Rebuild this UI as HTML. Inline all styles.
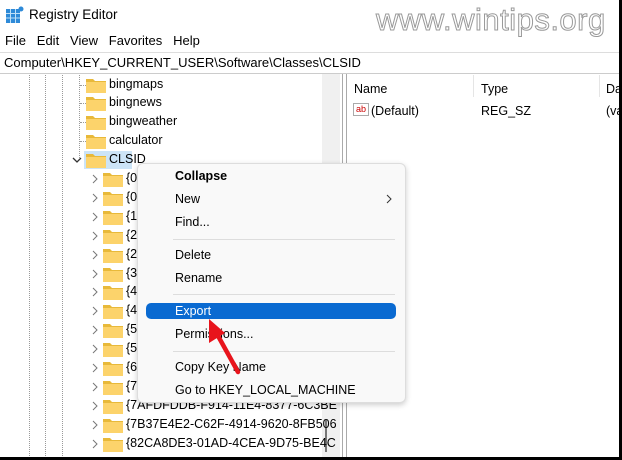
<!DOCTYPE html>
<html><head><style>
*{margin:0;padding:0;box-sizing:border-box}
html,body{width:622px;height:460px;overflow:hidden}
body{background:#fff;font-family:"Liberation Sans",sans-serif;font-size:12.5px;color:#000;position:relative}
.a{position:absolute;white-space:nowrap}
.f{position:absolute;width:20px;height:15px}
.dl{position:absolute;top:75px;width:0;height:385px;border-left:1px dotted #999}
.mi{position:absolute;left:175px;font-size:12.5px}
.sep{position:absolute;left:173px;width:222px;height:1px;background:#ddd}
</style></head><body>
<svg class="a" style="left:6px;top:6px" width="18" height="18" viewBox="0 0 18 18"><rect x="0" y="3" width="14" height="14" fill="#2e8ad8"/><g stroke="#bfe0f8" stroke-width="1"><line x1="0" y1="7.5" x2="14" y2="7.5"/><line x1="0" y1="12" x2="14" y2="12"/><line x1="4.5" y1="3" x2="4.5" y2="17"/><line x1="9.5" y1="3" x2="9.5" y2="17"/></g><circle cx="15" cy="3" r="2.5" fill="#2e8ad8"/></svg>
<div class="a" style="left:29px;top:7px;font-size:13.5px">Registry Editor</div>
<div class="a" style="left:376px;top:2px;font-size:31px;color:#fff;-webkit-text-stroke:1px #999;letter-spacing:0.5px">www.wintips.org</div>
<div class="a" style="left:5px;top:33px;font-size:13px">File&nbsp;&nbsp;&nbsp;Edit&nbsp;&nbsp;&nbsp;View&nbsp;&nbsp;&nbsp;Favorites&nbsp;&nbsp;&nbsp;Help</div>
<div class="a" style="left:0;top:52px;width:622px;height:1px;background:#ddd"></div>
<div class="a" style="left:4px;top:55px;font-size:13px">Computer\HKEY_CURRENT_USER\Software\Classes\CLSID</div>
<div class="a" style="left:0;top:73px;width:622px;height:1px;background:#ccc"></div>
<div class="dl" style="left:29px"></div><div class="dl" style="left:45px"></div><div class="dl" style="left:62px"></div><div class="dl" style="left:79px;height:85px"></div>
<div class="a" style="left:322px;top:74px;width:18px;height:386px;background:#f0f0f0"></div>
<div class="a" style="left:325px;top:420px;width:2px;height:32px;background:#777"></div>
<div class="a" style="left:342px;top:74px;width:1px;height:386px;background:#aaa"></div>
<div class="a" style="left:346px;top:74px;width:1px;height:386px;background:#aaa"></div>
<div class="a" style="left:354px;top:82px">Name</div>
<div class="a" style="left:473px;top:75px;width:1px;height:22px;background:#e5e5e5"></div>
<div class="a" style="left:481px;top:82px">Type</div>
<div class="a" style="left:599px;top:75px;width:1px;height:22px;background:#e5e5e5"></div>
<div class="a" style="left:606px;top:82px">Da</div>
<div class="a" style="left:353px;top:103px;width:16px;height:13px;border:1px solid #aaa;font-size:9px;color:#c00;line-height:11px;text-align:center">ab</div>
<div class="a" style="left:371px;top:104px">(Default)</div>
<div class="a" style="left:481px;top:104px">REG_SZ</div>
<div class="a" style="left:606px;top:104px">(va</div>
<div class="a" style="left:84px;top:151px;width:48px;height:18px;background:#cce4f7"></div>
<div id="tree"></div>
<script>
var h='';function fold(x,y){return '<svg class="f" style="left:'+x+'px;top:'+(y-7)+'px" viewBox="0 0 20 15"><path d="M0 1h7l2 2h11v12H0z" fill="#e8b93a"/><rect x="0" y="4" width="20" height="11" fill="#fcd36b"/></svg>';}
var top4=[['bingmaps',85],['bingnews',103],['bingweather',122],['calculator',141]];
top4.forEach(function(r){h+='<div class="a" style="left:80px;top:'+r[1]+'px;width:6px;border-top:1px dotted #999"></div>'+fold(86,r[1])+'<div class="a" style="left:109px;top:'+(r[1]-8)+'px">'+r[0]+'</div>';});
h+='<svg class="a" style="left:72px;top:156px" width="10" height="8"><path d="M1 2l4 4 4-4" stroke="#333" stroke-width="1.3" fill="none"/></svg>'+fold(86,160)+'<div class="a" style="left:109px;top:152px">CLSID</div>';
var sub=['{0','{0','{1','{2','{2','{3','{4','{4','{5','{5','{6','{7','{7AFDFDDB-F914-11E4-8377-6C3BE','{7B37E4E2-C62F-4914-9620-8FB506','{82CA8DE3-01AD-4CEA-9D75-BE4C'];
sub.forEach(function(s,i){var y=179+i*18.9;h+='<svg class="a" style="left:91px;top:'+(y-5)+'px" width="8" height="10"><path d="M2 1l4 4-4 4" stroke="#777" fill="none"/></svg>'+fold(103,y)+'<div class="a" style="left:126px;top:'+(y-8)+'px">'+s+'</div>';});
document.getElementById('tree').innerHTML=h;
</script>
<div class="a" style="left:137px;top:163px;width:269px;height:240px;background:#f9f9f9;border:1px solid #ddd;border-radius:6px;box-shadow:0 2px 6px rgba(0,0,0,.2)"></div>
<div class="mi" style="top:169px;font-weight:bold">Collapse</div>
<div class="mi" style="top:192px">New</div>
<svg class="a" style="left:385px;top:194px" width="8" height="10"><path d="M2 1l4 4-4 4" stroke="#333" fill="none"/></svg>
<div class="mi" style="top:215px">Find...</div>
<div class="sep" style="top:239px"></div>
<div class="mi" style="top:248px">Delete</div>
<div class="mi" style="top:271px">Rename</div>
<div class="sep" style="top:294px"></div>
<div class="a" style="left:146px;top:303px;width:250px;height:16px;background:#0a6ad1;border-radius:5px"></div>
<div class="mi" style="top:304px;color:#fff">Export</div>
<div class="mi" style="top:327px">Permissions...</div>
<div class="sep" style="top:351px"></div>
<div class="mi" style="top:360px">Copy Key Name</div>
<div class="mi" style="top:383px">Go to HKEY_LOCAL_MACHINE</div>
<svg class="a" style="left:0;top:0" width="622" height="460"><path d="M238 372 L217 334" stroke="#e8141c" stroke-width="4.5" stroke-linecap="round"/><path d="M209 319 L209 343 L225 333 Z" fill="#e8141c"/></svg>
<div class="a" style="left:619px;top:0;width:3px;height:460px;background:#000"></div>
<div class="a" style="left:0;top:457px;width:622px;height:3px;background:#000"></div>
</body></html>
